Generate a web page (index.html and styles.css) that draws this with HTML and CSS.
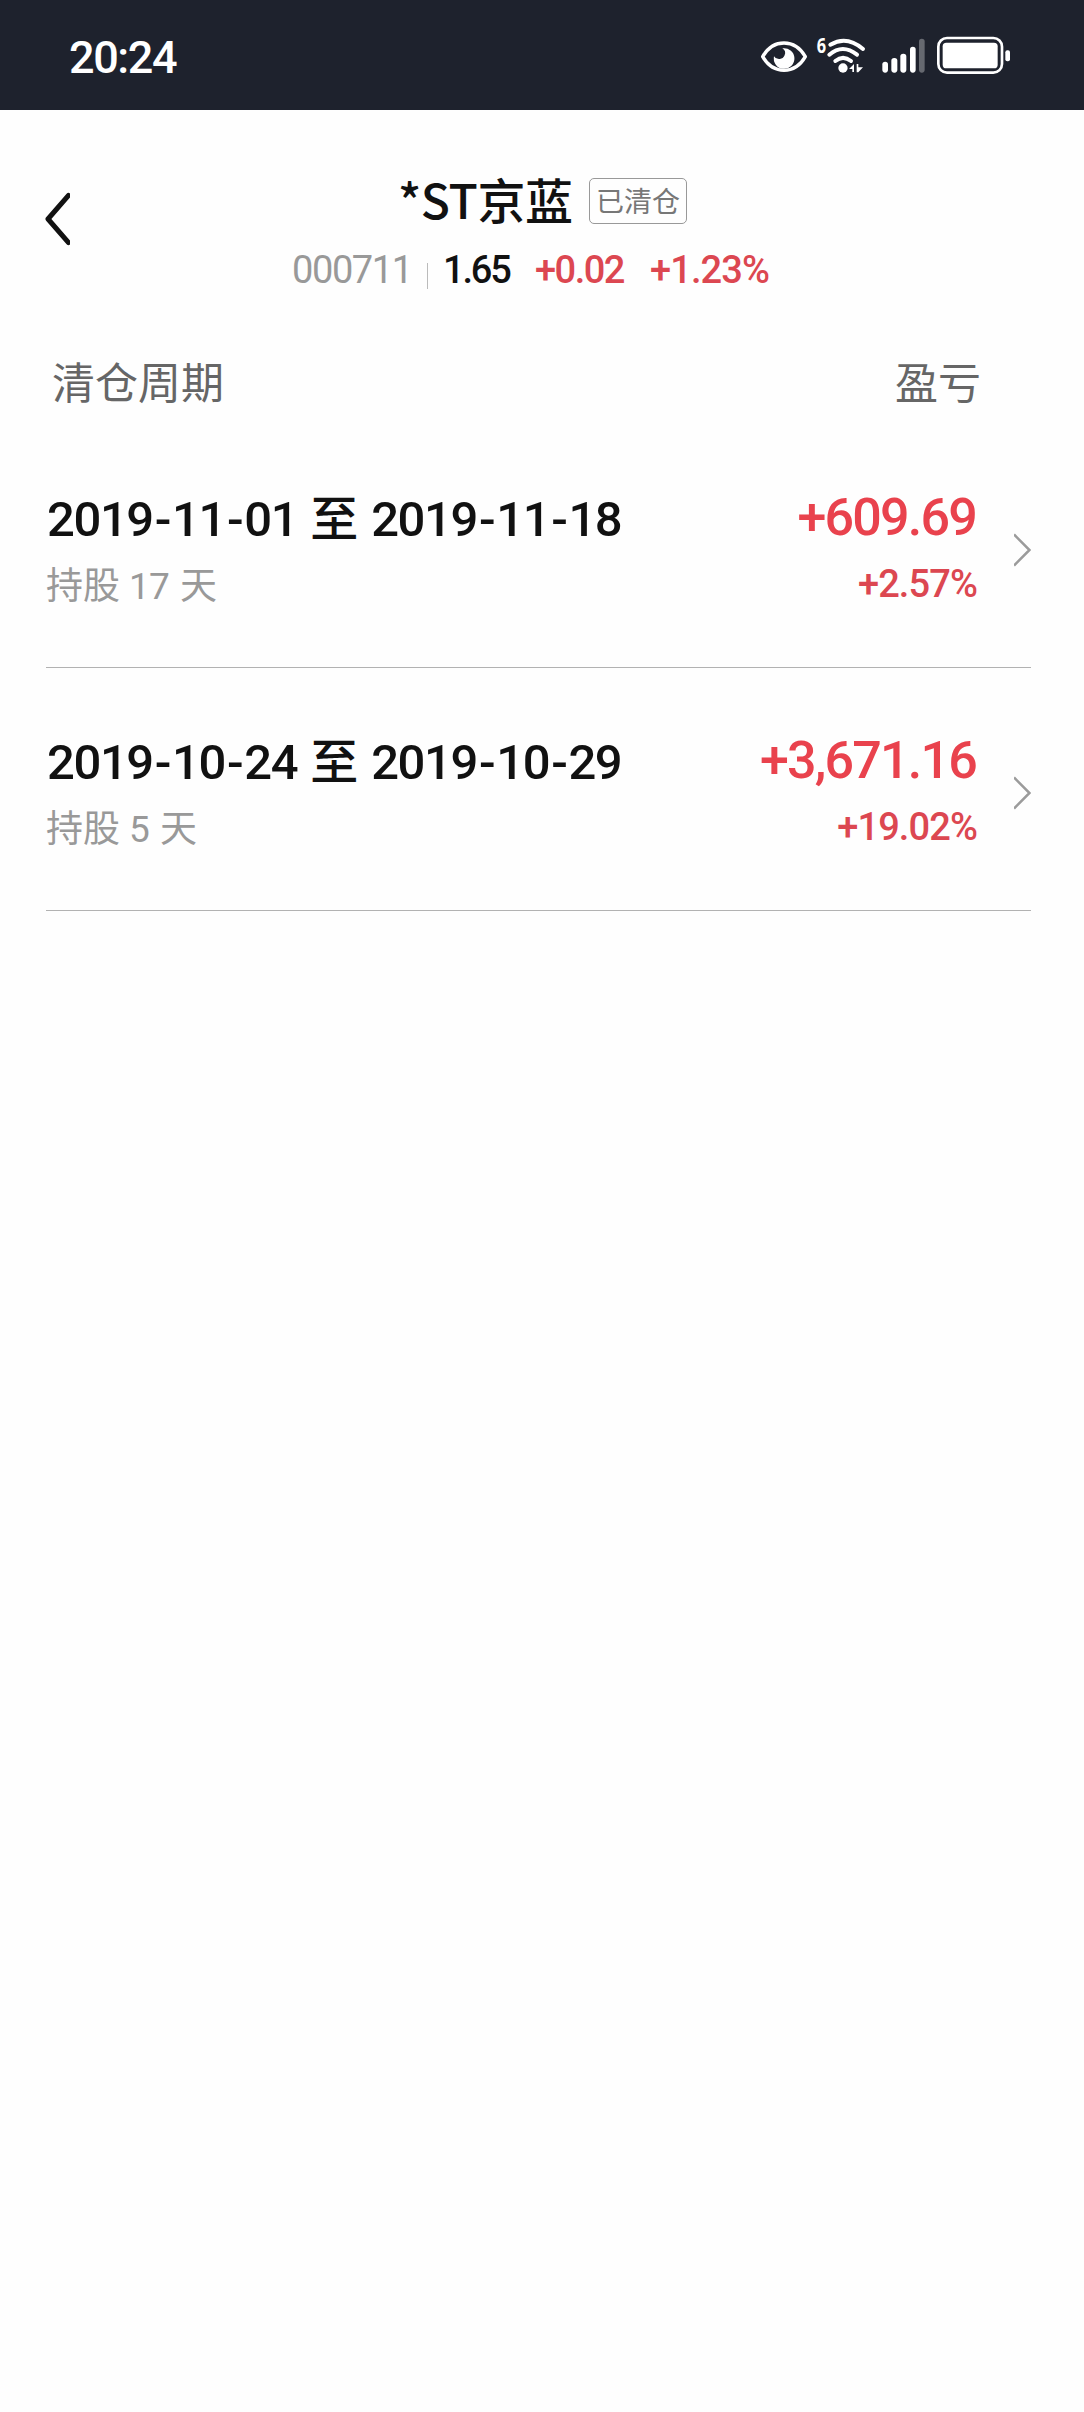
FILE: index.html
```html
<!DOCTYPE html>
<html lang="zh-CN">
<head>
<meta charset="utf-8">
<title>*ST京蓝</title>
<link rel="stylesheet" href="styles.css">
</head>
<body>
<div class="status-bar">
  <span class="clock">20:24</span>
  <div class="status-icons">
    <svg class="icon-eye" viewBox="60 45 144 120" width="48" height="40">
      <path d="M68 110C84 82 107 69 132 69s48 13 64 41c-16 28-39 41-64 41s-48-13-64-41Z" fill="none" stroke="#fff" stroke-width="10" stroke-linejoin="round"/>
      <path d="M127 85a31 31 0 1 1-25 24 14 14 0 0 0 12 7 17 17 0 0 0 13-31Z" fill="#fff"/>
    </svg>
    <svg class="icon-wifi" viewBox="228 36 150 129" width="50" height="43">
      <text class="wifi-gen" x="230" y="99" textLength="28" lengthAdjust="spacingAndGlyphs">6</text>
      <g fill="none" stroke="#fff" stroke-width="12" stroke-linecap="round">
        <path d="M271 74Q320 45 369 87"/>
        <path d="M268 104Q308 70 351 104"/>
        <path d="M286 123Q309 104 333 123"/>
      </g>
      <circle cx="309" cy="144" r="14" fill="#fff"/>
      <path d="M327 147L342 132V156H337V147ZM350 132H355V142H369L355 157H350Z" fill="#fff"/>
    </svg>
    <svg class="icon-signal" viewBox="423 45 135 120" width="45" height="40">
      <g fill="#fff">
        <rect x="427" y="125" width="17" height="33" rx="8.5"/>
        <rect x="454" y="114" width="18" height="44" rx="8.5"/>
        <rect x="481" y="101" width="18" height="57" rx="8.5"/>
        <rect x="510" y="80" width="17" height="78" rx="8.5"/>
        <rect x="537" y="56" width="17" height="102" rx="8.5" opacity=".32"/>
      </g>
    </svg>
    <svg class="icon-battery" viewBox="588 45 225 120" width="75" height="40">
      <rect x="595" y="54" width="191" height="104" rx="26" fill="none" stroke="#fff" stroke-width="8"/>
      <rect x="608" y="68" width="165" height="77" rx="11" fill="#fff"/>
      <rect x="796" y="91" width="14" height="33" rx="6" fill="#fff"/>
    </svg>
  </div>
</div>

<header class="header">
  <svg class="back" viewBox="0 0 26 54" width="26" height="54"><path d="M24.500 3.500L4 27L24.500 50.500" fill="none" stroke="#111" stroke-width="5" stroke-linecap="round" stroke-linejoin="round"/></svg>
  <div class="title-row">
    <h1 class="title">*ST京蓝</h1>
    <span class="badge">已清仓</span>
  </div>
  <div class="quote">
    <span class="code">000711</span>
    <span class="separator"></span>
    <span class="price">1.65</span>
    <span class="change">+0.02</span>
    <span class="percent">+1.23%</span>
  </div>
</header>

<main class="records">
  <div class="records-head"><span>清仓周期</span><span>盈亏</span></div>
  <div class="record">
    <div class="period">
      <div class="dates"><span>2019<i>-</i>11<i>-</i>01</span><b>至</b><span>2019<i>-</i>11<i>-</i>18</span></div>
      <div class="held">持股<span class="days">17</span>天</div>
    </div>
    <div class="profit">
      <div class="amount">+609.69</div>
      <div class="rate">+2.57%</div>
    </div>
    <svg class="chevron" viewBox="0 0 17 34" width="17" height="34"><path d="M0 1.500L15.500 17L0 32.500" fill="none" stroke="#9b9b9b" stroke-width="2.600"/></svg>
  </div>
  <div class="record">
    <div class="period">
      <div class="dates"><span>2019<i>-</i>10<i>-</i>24</span><b>至</b><span>2019<i>-</i>10<i>-</i>29</span></div>
      <div class="held">持股<span class="days">5</span>天</div>
    </div>
    <div class="profit">
      <div class="amount">+3,671.16</div>
      <div class="rate">+19.02%</div>
    </div>
    <svg class="chevron" viewBox="0 0 17 34" width="17" height="34"><path d="M0 1.500L15.500 17L0 32.500" fill="none" stroke="#9b9b9b" stroke-width="2.600"/></svg>
  </div>
</main>
</body>
</html>
```

FILE: styles.css
```css
* { box-sizing: border-box; }

body {
  margin: 0;
  min-height: 2412px;
  background: #fefefe;
  color: #111;
  font-family: Roboto, "Noto Sans CJK SC", sans-serif;
}

.status-bar {
  display: flex;
  align-items: center;
  justify-content: space-between;
  height: 110px;
  padding: 2px 73px 0 69px;
  background: #1e222d;
  color: #fff;
}
.clock { font-size: 45px; font-weight: 500; line-height: 60px; padding-top: 4px; letter-spacing: -1.4px; }
.status-icons { display: flex; align-items: flex-end; height: 40px; margin-top: -2px; }
.icon-wifi { margin-left: 8px; }
.icon-signal { margin-left: 15px; }
.icon-battery { margin-left: 10px; }
.wifi-gen { font: 700 62px "Open Sans", sans-serif; fill: #fff; }

.header {
  display: grid;
  grid-template-columns: 26px 1fr;
  grid-template-rows: 60px 62px;
  height: 240px;
  padding: 58px 45px 0 44px;
}
.back { grid-row: 1 / 3; margin-top: 24px; }
.title-row { display: flex; padding-left: 328px; }
.title {
  width: 191px;
  margin: 0;
  font: 500 48px/60px "Noto Sans CJK SC", sans-serif;
  letter-spacing: -0.4px;
  white-space: nowrap;
}
.badge {
  width: 98px;
  height: 46px;
  margin-top: 10px;
  border: 1px solid #999;
  border-radius: 5px;
  color: #777;
  font: 400 28px/42px "Noto Sans CJK SC", sans-serif;
  text-align: center;
}
.quote {
  display: flex;
  padding-left: 222px;
  font-size: 38px;
  font-weight: 500;
  line-height: 84px;
  height: 84px;
  white-space: nowrap;
}
.code { width: 135px; color: #999; font-weight: 400; letter-spacing: -1.4px; }
.separator { width: 1px; height: 26px; margin-top: 35px; background: #bbb; }
.price { width: 107px; padding-left: 15px; letter-spacing: -2.2px; }
.change { width: 115px; color: #dc4751; letter-spacing: -1.5px; }
.percent { color: #dc4751; letter-spacing: -0.9px; }

.records { padding: 0 53px 0 46px; }
.records-head {
  display: flex;
  justify-content: space-between;
  height: 75px;
  padding: 0 50px 0 6px;
  color: #666;
  font: 400 43px/61px "Noto Sans CJK SC", sans-serif;
}
.record {
  display: flex;
  height: 243px;
  padding-top: 64px;
  border-bottom: 1px solid #b2b2b2;
}
.period { flex: 1; }
.dates {
  display: flex;
  padding-left: 1px;
  font-size: 49px;
  font-weight: 500;
  line-height: 61px;
  letter-spacing: -1.4px;
  white-space: nowrap;
}
.dates i { font-style: normal; margin: 0 2px; }
.dates b { width: 61px; margin-left: 13px; font-weight: 500; font-size: 48px; }
.held { color: #999; font-size: 37px; line-height: 74px; }
.days { margin: 0 11px 0 9px; letter-spacing: -0.8px; }
.profit { text-align: right; white-space: nowrap; font-weight: 500; }
.amount { padding-right: 2px; color: #e9424d; font-size: 52px; line-height: 57px; letter-spacing: -1.8px; }
.rate { padding-right: 1px; color: #dc4751; font-size: 38px; line-height: 77px; letter-spacing: -0.9px; }
.chevron { margin: 44px 0 0 36px; }
```
